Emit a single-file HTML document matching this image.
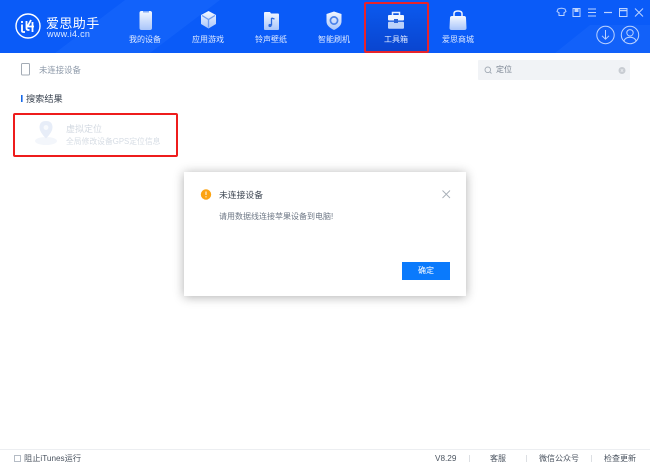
<!DOCTYPE html>
<html><head><meta charset="utf-8"><style>
*{margin:0;padding:0;box-sizing:border-box}
html,body{width:650px;height:468px;overflow:hidden;background:#fff}
body{position:relative;font-family:"Liberation Sans","Noto Sans CJK SC",sans-serif}
.t{position:absolute;white-space:nowrap;line-height:12px}
.nav{color:#dfeaff;font-size:8px;top:34px;width:60px;text-align:center}
svg{position:absolute;left:0;top:0}
</style></head><body>
<svg width="650" height="53" viewBox="0 0 650 53">
<defs>
<linearGradient id="ic" x1="0" y1="0" x2="0" y2="1"><stop offset="0" stop-color="#f4f8ff"/><stop offset="1" stop-color="#a9c5fa"/></linearGradient>
<linearGradient id="tool" x1="0" y1="0" x2="0" y2="1"><stop offset="0" stop-color="#0b5af0"/><stop offset="1" stop-color="#0a45cf"/></linearGradient>
</defs>
<rect width="650" height="53" fill="#0a5bf8"/>
<polygon points="55,53 125,0 220,0 150,53" fill="#1a68fb" opacity=".55"/>
<polygon points="555,53 590,25 650,25 650,53" fill="#1766fa" opacity=".6"/>
<rect x="364" y="2" width="65" height="50" fill="url(#tool)"/>
<rect x="365" y="3" width="63" height="49" fill="none" stroke="#e8232b" stroke-width="2" rx="1"/>
<!-- logo -->
<circle cx="28" cy="26" r="12" fill="none" stroke="#fff" stroke-width="1.400"/>
<path d="M22 21v2M22 24.500v6.500q0 1 1.500 1H25M26.500 21v7q0 2 2 2h1M31 20l-3.500 6.500h6.500M32.500 22v10" fill="none" stroke="#fff" stroke-width="1.800"/>
<!-- phone -->
<rect x="139.500" y="11" width="12.500" height="19" rx="2" fill="url(#ic)"/>
<rect x="143" y="11" width="6" height="1.500" fill="#7fa8f5"/>
<!-- cube -->
<path d="M208.500 11l7.500 4v9l-7.500 4.500-7.500-4.500v-9z" fill="url(#ic)"/>
<path d="M202 15.500l6.500 4 6.500-4M208.500 19.500v8" fill="none" stroke="#6d9bf2" stroke-width="1.300"/>
<!-- folder -->
<path d="M264 13q0-1 1-1h5l1 1.500h7q1 0 1 1V29q0 1-1 1h-13q-1 0-1-1z" fill="url(#ic)"/>
<path d="M271.500 18v7.500M271.500 18l3 1" fill="none" stroke="#2c6adf" stroke-width="1.300"/><circle cx="270" cy="25.500" r="1.600" fill="#2c6adf"/>
<!-- shield -->
<path d="M334 11.500l7.500 2.500v7.500q0 5-7.500 8.500-7.500-3.500-7.500-8.500V14z" fill="url(#ic)"/>
<circle cx="334" cy="20.500" r="3.600" fill="none" stroke="#4a82ea" stroke-width="1.700"/>
<!-- toolbox -->
<path d="M392.500 15v-2.500h7V15" fill="none" stroke="#e8f0ff" stroke-width="1.500"/>
<rect x="388" y="15" width="16" height="5.500" rx="1" fill="#f0f5ff"/>
<rect x="388" y="21.800" width="16" height="7" rx="1" fill="#bcd1fa"/>
<rect x="394" y="19" width="4" height="4" fill="#2c64d8"/>
<!-- bag -->
<path d="M454 16v-2.500q0-2.500 4-2.500t4 2.500V16" fill="none" stroke="#f0f5ff" stroke-width="1.500"/>
<path d="M452 16h12q2 0 2 2l.5 10q0 2-2 2h-13q-2 0-2-2l.5-10q0-2 2-2z" fill="url(#ic)"/>
<!-- window controls -->
<g fill="none" stroke="#bcd3ff" stroke-width="1">
<path d="M558 9l3 -.8 h1l3 .8 1 2.500-2 1.200v2.800h-5v-2.800l-2-1.200z"/>
<rect x="573" y="8.500" width="7" height="8"/><rect x="575" y="8.500" width="3" height="3" fill="#bcd3ff"/>
<path d="M588 9h8M588 12.500h8M588 16h8"/>
<path d="M604 12.500h8" stroke-width="1.200"/>
<rect x="619.500" y="8.500" width="7.500" height="8"/><path d="M619.500 10.500h7.500" stroke-width="1.500"/>
<path d="M635 8.500l8 8M643 8.500l-8 8"/>
<circle cx="605.500" cy="35" r="8.700"/>
<path d="M605.500 30v9M602 35.800l3.500 3.400 3.500-3.400"/>
<circle cx="630" cy="35" r="8.700"/>
<circle cx="630" cy="32.800" r="3.200"/>
<path d="M623.800 41q1.500-3.800 6.200-3.800t6.200 3.800"/>
</g>
</svg>
<div class="t" style="left:46px;top:17px;font-size:13px;font-weight:400;color:#fff;line-height:13px;letter-spacing:.4px">爱思助手</div>
<div class="t" style="left:47px;top:28px;font-size:9px;color:#dfeaff;letter-spacing:.3px">www.i4.cn</div>
<div class="t nav" style="left:115px">我的设备</div>
<div class="t nav" style="left:178px">应用游戏</div>
<div class="t nav" style="left:241px">铃声壁纸</div>
<div class="t nav" style="left:304px">智能刷机</div>
<div class="t nav" style="left:366px">工具箱</div>
<div class="t nav" style="left:428px">爱思商城</div>

<!-- sub header -->
<svg width="650" height="160" viewBox="0 0 650 160" style="top:0">
<rect x="21.500" y="63.500" width="8" height="11.500" rx="1" fill="none" stroke="#a3abb5" stroke-width="1"/>
<rect x="21" y="95" width="1.600" height="7" fill="#1668e8"/>
<rect x="478" y="60" width="152" height="20" rx="1" fill="#f1f3f6"/>
<circle cx="487.800" cy="69.800" r="2.800" fill="none" stroke="#a3abb5" stroke-width=".9"/>
<path d="M490 72l1.500 1.500" stroke="#a3abb5" stroke-width=".9"/>
<circle cx="622" cy="70.500" r="3.500" fill="#c8ccd2"/>
<path d="M620.800 69.300l2.400 2.400M623.200 69.300l-2.400 2.400" stroke="#eef0f3" stroke-width=".7"/>
<rect x="14" y="114" width="163" height="42" rx="1" fill="none" stroke="#ee1c1c" stroke-width="2"/>
<ellipse cx="46" cy="141" rx="11" ry="4" fill="#f3f6fb"/>
<path d="M46 121q6.500 0 6.500 6.500 0 4.500-6.500 11-6.500-6.500-6.500-11 0-6.500 6.500-6.500z" fill="#e7edf8"/>
<circle cx="46" cy="127.500" r="2.400" fill="#f8fafd"/>
</svg>
<div class="t" style="left:39px;top:64px;font-size:8.400px;color:#8c98a8">未连接设备</div>
<div class="t" style="left:26px;top:93px;font-size:9.200px;color:#3a4350">搜索结果</div>
<div class="t" style="left:496px;top:64px;font-size:8px;color:#7a8492">定位</div>
<div class="t" style="left:66px;top:123px;font-size:9px;color:#d3d9e1">虚拟定位</div>
<div class="t" style="left:66px;top:136px;font-size:7.800px;color:#d6dce4">全局修改设备GPS定位信息</div>

<!-- dialog -->
<div style="position:absolute;left:184px;top:172px;width:282px;height:124px;background:#fff;box-shadow:0 1px 10px rgba(0,0,0,.32)"></div>
<svg width="650" height="300" viewBox="0 0 650 300">
<circle cx="206" cy="194.500" r="5.200" fill="#fca311"/>
<path d="M206 191.500v3.500M206 196.200v1.200" stroke="#fff" stroke-width="1"/>
<path d="M442.500 190.500l7.500 7.500M450 190.500l-7.500 7.500" stroke="#a9b0b8" stroke-width=".9" fill="none"/>
</svg>
<div class="t" style="left:219px;top:189px;font-size:8.800px;color:#3d4652">未连接设备</div>
<div class="t" style="left:219px;top:211px;font-size:8px;color:#6d7785">请用数据线连接苹果设备到电脑!</div>
<div class="t" style="left:402px;top:262px;width:48px;height:18px;background:#0a7afc;color:#fff;font-size:8px;line-height:18px;text-align:center">确定</div>

<!-- footer -->
<div style="position:absolute;left:0;top:449px;width:650px;height:1px;background:#eceef1"></div>
<div style="position:absolute;left:14px;top:455px;width:7px;height:7px;border:1px solid #b5bcc5"></div>
<div class="t" style="left:24px;top:453px;font-size:8.200px;color:#4c5561">阻止iTunes运行</div>
<div class="t" style="left:435px;top:453px;font-size:8.200px;color:#4c5561">V8.29</div>
<div class="t" style="left:490px;top:453px;font-size:8px;color:#4c5561">客服</div>
<div class="t" style="left:539px;top:453px;font-size:8px;color:#4c5561">微信公众号</div>
<div class="t" style="left:604px;top:453px;font-size:8px;color:#4c5561">检查更新</div>
<div style="position:absolute;left:469px;top:455px;width:1px;height:7px;background:#dcdfe3"></div>
<div style="position:absolute;left:526px;top:455px;width:1px;height:7px;background:#dcdfe3"></div>
<div style="position:absolute;left:591px;top:455px;width:1px;height:7px;background:#dcdfe3"></div>
</body></html>
